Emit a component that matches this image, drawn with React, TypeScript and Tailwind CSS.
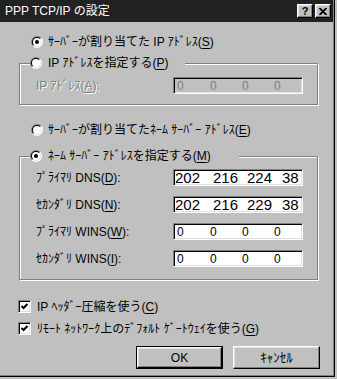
import React from "react";

const halfDisk = (r: number, upperLeft: boolean) => {
  const d = r / Math.SQRT2;
  const x1 = 6 + d;
  const y1 = 6 - d;
  const x2 = 6 - d;
  const y2 = 6 + d;
  return upperLeft
    ? `M${x1} ${y1} A${r} ${r} 0 0 0 ${x2} ${y2} Z`
    : `M${x1} ${y1} A${r} ${r} 0 0 1 ${x2} ${y2} Z`;
};

const Radio: React.FC<{ checked?: boolean }> = ({ checked }) => (
  <svg width="12" height="12" viewBox="0 0 12 12" className="shrink-0">
    <path d={halfDisk(6, true)} fill="#808080" />
    <path d={halfDisk(6, false)} fill="#ffffff" />
    <path d={halfDisk(5, true)} fill="#000000" />
    <path d={halfDisk(5, false)} fill="#dfdfdf" />
    <circle cx="6" cy="6" r="4" fill="#ffffff" />
    {checked && <circle cx="6" cy="6" r="2" fill="#000000" />}
  </svg>
);

const Check: React.FC = () => (
  <div className="w-[13px] h-[13px] shrink-0 bg-white border border-t-[#808080] border-l-[#808080] border-b-white border-r-white shadow-[inset_1px_1px_0_#000,inset_-1px_-1px_0_#dfdfdf]">
    <svg width="11" height="11" viewBox="0 0 11 11">
      <path d="M2.5 5 L4.5 7 L8.5 3" stroke="#000" strokeWidth="2" fill="none" />
    </svg>
  </div>
);

const Key: React.FC<{ k: string }> = ({ k }) => (
  <>
    (<span className="underline underline-offset-2">{k}</span>)
  </>
);

const IpField: React.FC<{ values: string[]; big?: boolean; disabled?: boolean }> = ({
  values,
  big,
  disabled,
}) => (
  <div
    className={`w-[130px] h-[17px] shrink-0 border border-t-[#808080] border-l-[#808080] border-b-white border-r-white shadow-[inset_1px_1px_0_#000,inset_-1px_-1px_0_#dfdfdf] flex items-center ${
      disabled ? "bg-[#c0c0c0] text-[#808080]" : "bg-white text-black"
    }`}
  >
    {big ? (
      <div className="grid grid-cols-[38px_34px_35px_auto] pl-[1px] text-[15px] leading-[15px]">
        {values.map((v, i) => (
          <span key={i}>{v}</span>
        ))}
      </div>
    ) : (
      <div className="grid grid-cols-[33px_32px_32px_auto] pl-[3px] text-[12px] leading-[14px]">
        {values.map((v, i) => (
          <span key={i}>{v}</span>
        ))}
      </div>
    )}
  </div>
);

const Row: React.FC<{ label: React.ReactNode; children: React.ReactNode; disabled?: boolean }> = ({
  label,
  children,
  disabled,
}) => (
  <div className="flex items-center pl-[16px]">
    <span
      className={`w-[137px] ${
        disabled ? "text-[#808080] [text-shadow:1px_1px_0_#fff]" : ""
      }`}
    >
      {label}
    </span>
    {children}
  </div>
);

const App: React.FC = () => {
  return (
    <div className="w-[337px] h-[379px] bg-[#c0c0c0] font-['Liberation_Sans','Noto_Sans_CJK_JP',sans-serif] text-[12px] leading-[16px] text-black overflow-hidden">
      <div className="w-[335px] h-[377px] border-r border-b border-black">
        <div className="h-full border-r border-b border-[#808080]">
          {/* Title bar */}
          <div className="h-[22px] bg-[#222222] flex items-center justify-between pl-[5px] pr-[2px]">
            <span className="text-white text-[12px]">PPP TCP/IP の設定</span>
            <div className="flex gap-[2px]">
              <div className="w-[16px] h-[14px] bg-[#c0c0c0] border border-t-white border-l-white border-b-black border-r-black shadow-[inset_-1px_-1px_0_#808080,inset_1px_1px_0_#dfdfdf] flex items-center justify-center">
                <span className="text-[11px] leading-[11px] font-bold">?</span>
              </div>
              <div className="w-[16px] h-[14px] bg-[#c0c0c0] border border-t-white border-l-white border-b-black border-r-black shadow-[inset_-1px_-1px_0_#808080,inset_1px_1px_0_#dfdfdf] flex items-center justify-center">
                <svg width="8" height="7" viewBox="0 0 8 7">
                  <path d="M0.5 0 L7.5 7 M7.5 0 L0.5 7" stroke="#000" strokeWidth="1.8" />
                </svg>
              </div>
            </div>
          </div>

          {/* Body */}
          <div className="flex flex-col pl-[19px]">
            <div className="mt-[12px] h-[16px] flex items-center gap-[5px] pl-[12px]">
              <Radio checked />
              <span>
                ｻｰﾊﾞｰが割り当てた IP ｱﾄﾞﾚｽ<Key k="S" />
              </span>
            </div>

            <fieldset className="mt-[5px] w-[299px] border border-[#808080] shadow-[inset_1px_1px_0_#fff,1px_1px_0_#fff] px-0 pt-[6px] pb-[10px]">
              <legend className="ml-[10px] w-[155px] h-[16px] bg-[#c0c0c0] flex items-center gap-[6px]">
                <Radio />
                <span>
                  IP ｱﾄﾞﾚｽを指定する<Key k="P" />
                </span>
              </legend>
              <Row disabled label={<>IP ｱﾄﾞﾚｽ<Key k="A" />:</>}>
                <IpField disabled values={["0", "0", "0", "0"]} />
              </Row>
            </fieldset>

            <div className="mt-[17px] h-[16px] flex items-center gap-[5px] pl-[12px]">
              <Radio />
              <span>
                ｻｰﾊﾞｰが割り当てたﾈｰﾑ ｻｰﾊﾞｰ ｱﾄﾞﾚｽ<Key k="E" />
              </span>
            </div>

            <fieldset className="mt-[10px] w-[299px] border border-[#808080] shadow-[inset_1px_1px_0_#fff,1px_1px_0_#fff] px-0 pt-[5px] pb-[12px]">
              <legend className="ml-[10px] w-[209px] h-[16px] bg-[#c0c0c0] flex items-center gap-[6px]">
                <Radio checked />
                <span>
                  ﾈｰﾑ ｻｰﾊﾞｰ ｱﾄﾞﾚｽを指定する<Key k="M" />
                </span>
              </legend>
              <div className="flex flex-col gap-[10px]">
                <Row label={<>ﾌﾟﾗｲﾏﾘ DNS<Key k="D" />:</>}>
                  <IpField big values={["202", "216", "224", "38"]} />
                </Row>
                <Row label={<>ｾｶﾝﾀﾞﾘ DNS<Key k="N" />:</>}>
                  <IpField big values={["202", "216", "229", "38"]} />
                </Row>
                <Row label={<>ﾌﾟﾗｲﾏﾘ WINS<Key k="W" />:</>}>
                  <IpField values={["0", "0", "0", "0"]} />
                </Row>
                <Row label={<>ｾｶﾝﾀﾞﾘ WINS<Key k="I" />:</>}>
                  <IpField values={["0", "0", "0", "0"]} />
                </Row>
              </div>
            </fieldset>

            <div className="mt-[20px] h-[13px] flex items-center gap-[6px] -ml-[1px]">
              <Check />
              <span>
                IP ﾍｯﾀﾞｰ圧縮を使う<Key k="C" />
              </span>
            </div>
            <div className="mt-[9px] h-[13px] flex items-center gap-[6px] -ml-[1px]">
              <Check />
              <span>
                ﾘﾓｰﾄ ﾈｯﾄﾜｰｸ上のﾃﾞﾌｫﾙﾄ ｹﾞｰﾄｳｪｲを使う<Key k="G" />
              </span>
            </div>

            <div className="mt-[11px] flex justify-end gap-[10px] pr-[13px]">
              <div className="w-[87px] h-[23px] border border-black">
                <div className="h-full border border-t-white border-l-white border-b-black border-r-black shadow-[inset_-1px_-1px_0_#808080,inset_1px_1px_0_#dfdfdf] flex items-center justify-center">
                  OK
                </div>
              </div>
              <div className="w-[87px] h-[23px] border border-t-white border-l-white border-b-black border-r-black shadow-[inset_-1px_-1px_0_#808080,inset_1px_1px_0_#dfdfdf] flex items-center justify-center text-[13px]">
                ｷｬﾝｾﾙ
              </div>
            </div>
          </div>
        </div>
      </div>
    </div>
  );
};

export default App;
